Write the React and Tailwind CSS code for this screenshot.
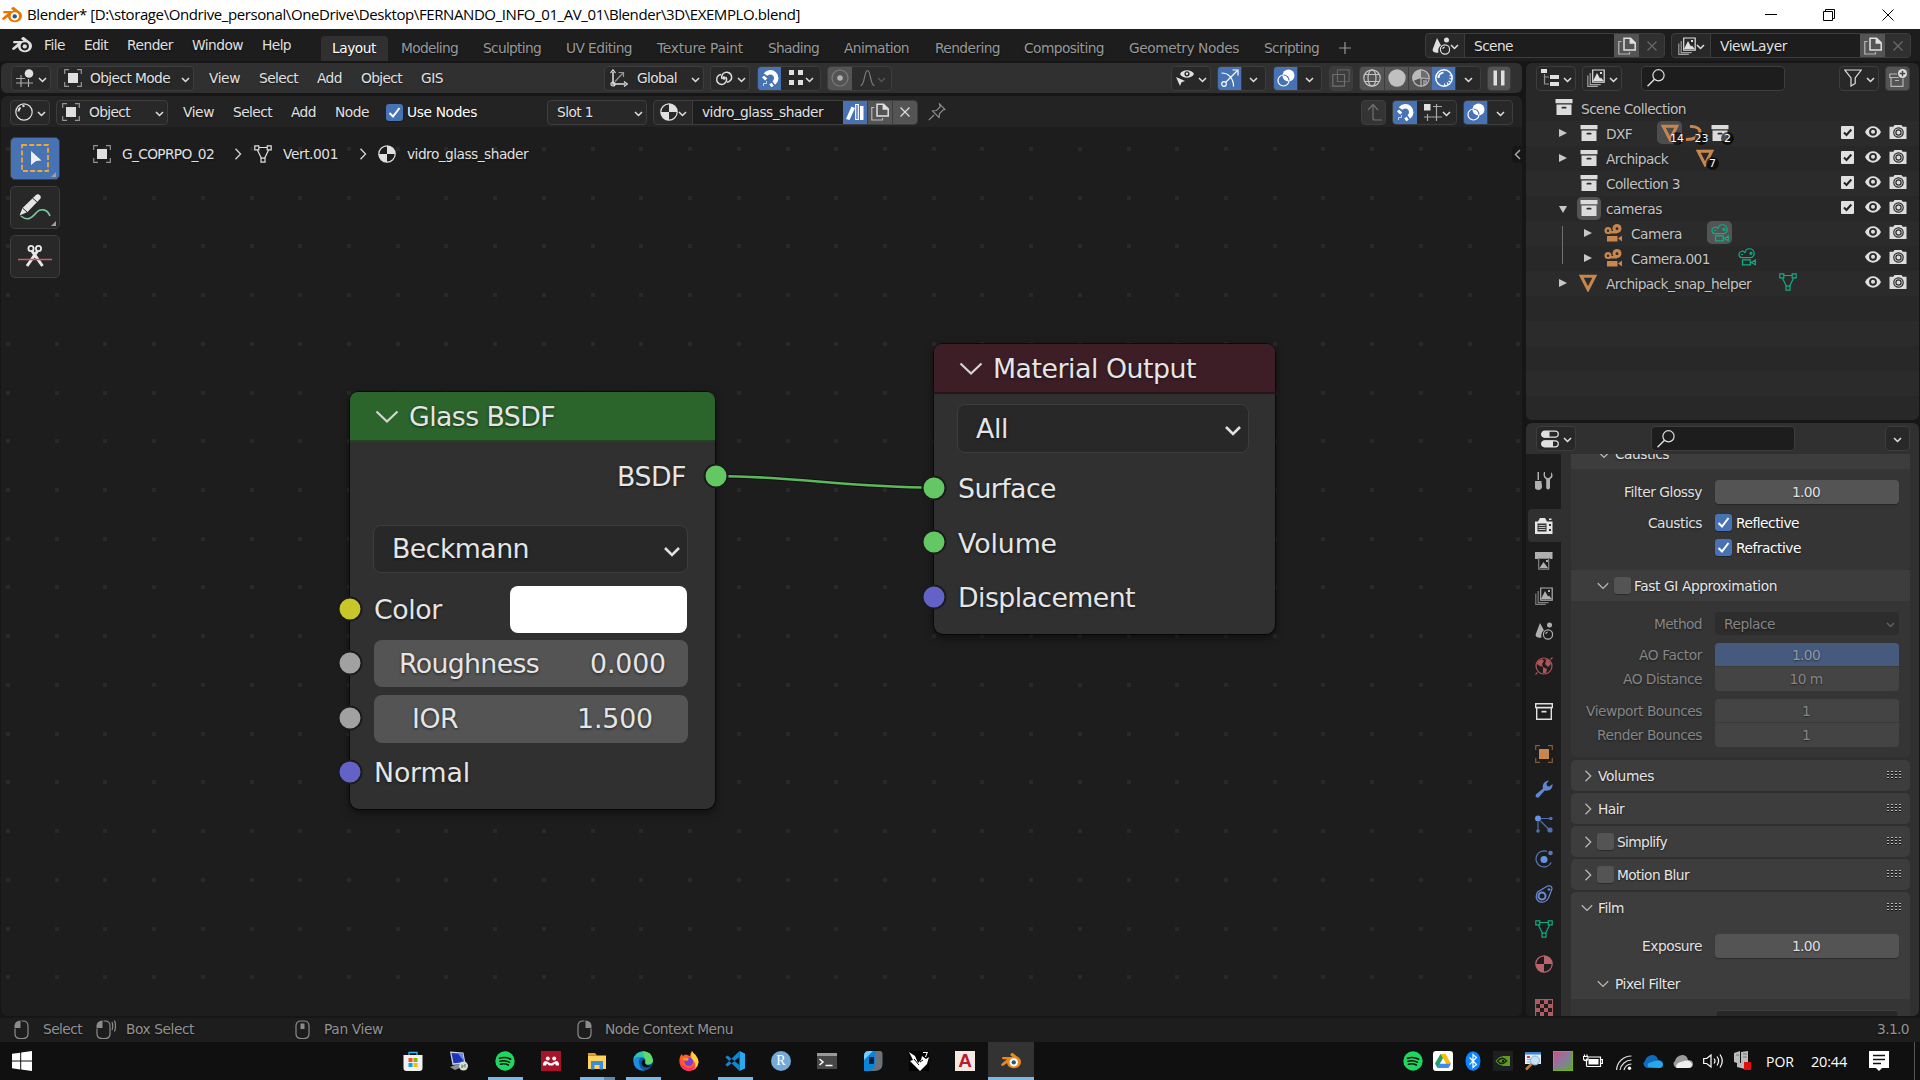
import React from "react";

/* ---------- text ---------- */

const ctx = document.createElement("canvas").getContext("2d");

// Glyph advances in this interface are cut to whole pixels; spread that over the run.
function spacing(text, size) {
  ctx.font = size + 'px "DejaVu Sans"';
  let cut = 0;
  for (const ch of text) cut += Math.floor(ctx.measureText(ch).width + 0.01);
  return (cut - ctx.measureText(text).width) / text.length;
}

function T({ children, className = "" }) {
  return (
    <span
      className={"block shrink-0 whitespace-pre text-[13.75px] leading-[18px] [text-shadow:0_1px_2px_rgba(0,0,0,0.5)] " + className}
      style={{ letterSpacing: spacing(children, 13.75) }}
    >
      {children}
    </span>
  );
}

function Big({ children, className = "" }) {
  return (
    <span
      className={"block shrink-0 whitespace-pre text-[26.75px] leading-[32px] text-[#e5e5e5] [text-shadow:0_1px_3px_rgba(0,0,0,0.6)] " + className}
      style={{ letterSpacing: spacing(children, 26.75) }}
    >
      {children}
    </span>
  );
}

// Text set to a fixed run width.
function Fit({ children, width, font, className = "" }) {
  ctx.font = font;
  const ls = (width - ctx.measureText(children).width) / children.length;
  return (
    <span className={"block shrink-0 whitespace-pre " + className} style={{ letterSpacing: ls, font }}>
      {children}
    </span>
  );
}

/* ---------- icons ---------- */

function I({ children, s = 18, vb = 18, className = "" }) {
  return (
    <svg width={s} height={s} viewBox={`0 0 ${vb} ${vb}`} fill="none" stroke="currentColor" strokeWidth="1.2" className={"block shrink-0 " + className}>
      {children}
    </svg>
  );
}
const F = { fill: "currentColor", stroke: "none" };

const Down = ({ className = "" }) => (
  <svg width="9" height="6" viewBox="0 0 9 6" fill="none" stroke="currentColor" strokeWidth="1.5" className={"mt-[3px] block shrink-0 " + className}>
    <path d="M1 1l3.5 3.5L8 1" />
  </svg>
);
const Chev = ({ open, className = "" }) => (
  <svg width="12" height="12" viewBox="0 0 12 12" fill="none" stroke="#b8b8b8" strokeWidth="1.3" className={"block shrink-0 " + className}>
    <path d={open ? "M0.8 3.2L6 8.4l5.2-5.2" : "M3.5 0.8L8.7 6l-5.2 5.2"} />
  </svg>
);
const ObjectIcon = ({ className = "" }) => (
  <I className={className}>
    <rect x="4" y="4" width="10" height="10" {...F} />
    <path d="M.7 5V.7H5M13 .7h4.3V5M17.3 13v4.3H13M5 17.3H.7V13" opacity=".6" />
  </I>
);
const MeshData = ({ className = "" }) => (
  <I className={className}>
    <path d="M5 2.5h8M3.4 5l4 8.300M14.600 5l-4 8.300" />
    <path d="M.8.800h4v4h-4zM13.200.800h4v4h-4zM7 13.200h4v4H7z" />
  </I>
);
const MatIcon = ({ className = "" }) => (
  <I className={className}>
    <circle cx="9" cy="9" r="8.200" />
    <path d="M9 .8v8.200H17.200A8.200 8.200 0 0 0 9 .8zM9 9v8.200A8.200 8.200 0 0 1 .8 9z" {...F} />
  </I>
);
const Collection = ({ className = "" }) => (
  <I className={className}>
    <path d="M.5 1h17v4.300H.5zM1.500 6.600h15V17h-15z" {...F} />
    <rect x="6.500" y="8.700" width="5" height="1.900" rx=".9" fill="#2b2b2b" stroke="none" />
  </I>
);
const Magnet = () => (
  <I>
    <path d="M4.500 5.500A6 6 0 1 1 12.800 14" strokeWidth="4.500" />
    <path d="M2 7.500l3.200 3M9.500 14.500l2 3" strokeWidth="3" />
    <path d="M5.500 12v2.500H2.500V17" strokeWidth="1" opacity=".7" />
  </I>
);
const Overlay = () => (
  <I className="text-white">
    <circle cx="11.500" cy="6.500" r="6" {...F} />
    <circle cx="6.500" cy="11.500" r="5.500" stroke="currentColor" />
    <path d="M6.500 6a5.500 5.500 0 0 1 5.500 5.500" stroke="#4772b3" />
  </I>
);
const Copy = () => (
  <I>
    <path d="M6 1.200h6.500l4.700 4.600V13H6zM12.300 1.500v4.500h4.500" strokeWidth="1.500" />
    <path d="M3.500 4.500H.8V17h10.700v-2" opacity=".7" />
    <path d="M12 1l5.300 5H12z" {...F} />
  </I>
);
const Images = () => (
  <I>
    <path d="M5.700 1h11.500v12.200H5.700z" />
    <path d="M6 12l4-8 3 5.500 1-1 2.800 3.500zM13 3h2v2h-2z" {...F} />
    <path d="M3.200 4v11.700h10.500M.8 6.500v10.800h10" opacity=".65" />
  </I>
);
const SceneIcon = () => (
  <I>
    <path d="M5 1L.8 12c-1 3 2.600 4.300 5.700 3.500C5.500 12 8 8.500 9 8.500z" {...F} />
    <circle cx="14.500" cy="3" r="2.500" {...F} />
    <circle cx="13" cy="12.500" r="4.600" />
    <path d="M10.800 12a2.300 2.300 0 0 1 2-2" />
  </I>
);
const X = ({ className = "" }) => (
  <I s={12} vb={12} className={className}>
    <path d="M1.500 1.500l9 9M10.500 1.500l-9 9" />
  </I>
);
const SearchIcon = () => (
  <I>
    <circle cx="11.500" cy="6.300" r="5.600" />
    <path d="M7.500 10.300L.5 17.300" strokeWidth="1.500" />
  </I>
);
const BlenderLogo = ({ c = "#e0e0e0", eye = "#1d1d1d", inner = "#e0e0e0", s = 20 }) => (
  <svg width={s} height={s} viewBox="0 0 24 24" className="block shrink-0">
    <path
      d="M12.600 2.800c.7-.6 1.700-.4 2.300.1l6.900 5.600c2.200 1.900 2.700 4.900 1.600 7.300-1.500 3.300-4.900 5-8.400 4.900-4-.1-7.300-2.700-7.800-6.300L3 17.500c-.8.6-1.900.6-2.500 0-.6-.7-.3-1.600.3-2.100L7.200 10H2.800c-1.900 0-1.900-2.800 0-2.800h11l-2.500-2.200c-.6-.6-.1-1.500 1.300-2.200z"
      fill={c}
    />
    <circle cx="15.300" cy="13.600" r="4.900" fill={eye} />
    <circle cx="15.300" cy="13.600" r="2.600" fill={inner} />
  </svg>
);
const EyeIcon = () => (
  <I className="text-[#e0e0e0]">
    <path d="M1 9c3.500-7.600 12.500-7.600 16 0-3.500 7.600-12.500 7.600-16 0z" {...F} />
    <circle cx="9" cy="8.800" r="3.900" fill="#2a2a2a" stroke="none" />
    <circle cx="9" cy="8.800" r="2" {...F} />
  </I>
);
const CamIcon = () => (
  <I className="text-[#dcdcdc]">
    <path d="M.5 3.800h3.800L5.500 2h7l1.200 1.800h3.800V16H.5z" {...F} />
    <circle cx="9.500" cy="9.500" r="4.700" stroke="#2a2a2a" />
    <circle cx="9.500" cy="9.500" r="2.600" stroke="#2a2a2a" />
  </I>
);
const CheckSq = () => (
  <I s={13} vb={13}>
    <rect width="13" height="13" rx="1" fill="#e0e0e0" stroke="none" />
    <path d="M3 6.500L5.500 9l4.800-5.500" stroke="#222" strokeWidth="2" />
  </I>
);
const MeshObj = ({ className = "" }) => (
  <I className={"text-[#c8864f] " + className}>
    <path d="M2.200 2.300h13.600L9 15.500z" strokeWidth="3" />
  </I>
);
const MovieObj = () => (
  <I className="text-[#c8864f]">
    <circle cx="4" cy="6.500" r="3.500" {...F} />
    <circle cx="13" cy="4.500" r="4.500" {...F} />
    <path d="M4 7h9v2.500H4zM3 12h10.500v5.500H3zM18 11.500v6l-4-3z" {...F} />
    <circle cx="4" cy="6.700" r="1.200" fill="#282828" stroke="none" />
    <circle cx="13" cy="4.700" r="1.400" fill="#282828" stroke="none" />
  </I>
);
const MovieData = () => (
  <I className="text-[#13ab84]">
    <path d="M7 4.500a4.600 4.600 0 1 1 6 5.200H4.200A3.200 3.200 0 1 1 7 5zM4.500 11.900h7.800v4.900H4.500zM17.300 12v4.700l-4-2.300z" />
    <circle cx="13" cy="5.300" r="1" />
    <path d="M3 6.500h2" />
  </I>
);

/* ---------- widgets ---------- */

function Group({ className = "", bg = "bg-[#282828]", color = "text-[#e0e0e0]", children }) {
  return <div className={`flex h-[25px] shrink-0 overflow-hidden rounded-[4px] border border-[#3d3d3d] ${bg} ${color} ${className}`}>{children}</div>;
}
const Cell = ({ className = "", children }) => <div className={"flex h-full shrink-0 items-center justify-center " + className}>{children}</div>;
const IconDrop = ({ className = "", children }) => (
  <Group className={"items-center justify-between pr-[3px] pl-[4px] " + className}>
    {children}
    <Down />
  </Group>
);
const Check = ({ on, className = "" }) => (
  <div className={"flex size-[17px] shrink-0 items-center justify-center rounded-[3px] shadow-[0_1px_1px_rgba(0,0,0,0.3)] " + (on ? "bg-[#4772b3] " : "bg-[#545454] ") + className}>
    {on && (
      <svg width="13" height="13" viewBox="0 0 13 13" fill="none" stroke="#fff" strokeWidth="2">
        <path d="M1.500 7l3.500 3.500 6.500-8.500" />
      </svg>
    )}
  </div>
);

/* ---------- window title + top bar ---------- */

function TitleBar() {
  return (
    <div className="flex h-[29px] items-center bg-white text-black">
      <div className="ml-[2px] w-[25px]"><BlenderLogo c="#ea7600" eye="#fff" inner="#265787" s={20} /></div>
      <Fit width={773} font={'15px "Open Sans", sans-serif'} className="mb-[2px]">{"Blender* [D:\\storage\\Ondrive_personal\\OneDrive\\Desktop\\FERNANDO_INFO_01_AV_01\\Blender\\3D\\EXEMPLO.blend]"}</Fit>
      <div className="ml-auto flex items-center">
        <svg width="12" height="12" viewBox="0 0 12 12" className="mr-[46px]"><path d="M0 5.500h12" stroke="#000" /></svg>
        <svg width="12" height="12" viewBox="0 0 12 12" fill="none" stroke="#000" className="mr-[47px]"><path d="M.5 2.500h9v9h-9zM2.500 2.500V.5h9v9h-2" /></svg>
        <svg width="12" height="12" viewBox="0 0 12 12" stroke="#000" className="mr-[26px]"><path d="M.5.5l11 11M11.500.5l-11 11" /></svg>
      </div>
    </div>
  );
}

const IdBlock = ({ icon, name, className = "" }) => (
  <Group className={"w-[240px] " + className}>
    <Cell className="w-[39px] justify-between border-r border-[#3d3d3d] px-[4px]">{icon}<Down /></Cell>
    <Cell className="grow justify-start bg-[#1d1d1d] pl-[9px]"><T>{name}</T></Cell>
    <Cell className="w-[25px] bg-[#545454]"><Copy /></Cell>
    <Cell className="w-[25px] bg-[#303030]"><X className="text-[#6a6a6a]" /></Cell>
  </Group>
);

function TopBar() {
  return (
    <div className="flex h-[32px] bg-[#1d1d1d] text-[#e0e0e0]">
      <div className="flex h-[32px] w-[321px] items-center">
        <div className="ml-[12px] w-[32px]"><BlenderLogo /></div>
        <T className="w-[40px]">File</T>
        <T className="w-[43px]">Edit</T>
        <T className="w-[65px]">Render</T>
        <T className="w-[70px]">Window</T>
        <T>Help</T>
      </div>
      <div className="mt-[7px] flex h-[25px] text-[#989898]">
        <div className="flex h-full w-[67px] rounded-t-[4px] bg-[#303030] pt-[3px] pl-[11px] text-white"><T>Layout</T></div>
        <div className="flex pt-[3px]">
          <T className="ml-[13px] w-[82px]">Modeling</T>
          <T className="w-[83px]">Sculpting</T>
          <T className="w-[91px]">UV Editing</T>
          <T className="w-[111px]">Texture Paint</T>
          <T className="w-[76px]">Shading</T>
          <T className="w-[91px]">Animation</T>
          <T className="w-[89px]">Rendering</T>
          <T className="w-[105px]">Compositing</T>
          <T className="w-[135px]">Geometry Nodes</T>
          <T className="w-[75px]">Scripting</T>
          <I s={12} vb={12} className="mt-[3px]"><path d="M6 0v12M0 6h12" /></I>
        </div>
      </div>
      <div className="mt-[4px] mr-[9px] ml-auto flex gap-[6px]">
        <IdBlock icon={<SceneIcon />} name="Scene" />
        <IdBlock icon={<Images />} name="ViewLayer" />
      </div>
    </div>
  );
}

/* ---------- 3D viewport header ---------- */

function ViewportHeader() {
  return (
    <div className="flex h-[30px] items-center rounded-[6px] bg-[#303030] pl-[10px] text-[#e0e0e0]">
      <IconDrop className="w-[40px]">
        <I>
          <path d="M5 6v12M12.500 10v8M0 9.500h9M0 14h17" opacity=".7" />
          <circle cx="13" cy="4.500" r="4.300" {...F} />
        </I>
      </IconDrop>
      <Group className="ml-[6px] w-[137px] items-center pr-[3px] pl-[6px]">
        <ObjectIcon />
        <T className="ml-[8px]">Object Mode</T>
        <Down className="ml-auto" />
      </Group>
      <T className="ml-[15px] w-[50px]">View</T>
      <T className="w-[58px]">Select</T>
      <T className="w-[44px]">Add</T>
      <T className="w-[60px]">Object</T>
      <T className="w-[183px]">GIS</T>
      <Group className="w-[100px] items-center pr-[3px] pl-[5px]">
        <I>
          <path d="M3 3v12h12" strokeWidth="1.500" />
          <path d="M.5 4L3 .8 5.500 4M14 12.500l3.200 2.500L14 17.500" />
          <circle cx="3" cy="15" r="2" />
          <path d="M5 12.500L13 4M8.500 3.500H13.500V8" opacity=".6" />
        </I>
        <T className="ml-[9px]">Global</T>
        <Down className="ml-auto" />
      </Group>
      <IconDrop className="ml-[6px] w-[40px]">
        <I>
          <path d="M7 10a5 5 0 1 1 5 3.200M11 8a5 5 0 1 1-5-2.500" strokeWidth="1.500" />
          <circle cx="9" cy="9" r="1.800" {...F} />
        </I>
      </IconDrop>
      <Group className="ml-[7px] w-[64px]">
        <Cell className="w-[23px] bg-[#4772b3] text-white"><Magnet /></Cell>
        <Cell className="grow justify-between pr-[3px] pl-[4px]">
          <I s={16} vb={16}><path d="M0 0h5v5H0zM9 0h5v5H9zM0 10h5v5H0zM9 10h5v5H9z" {...F} /></I>
          <Down />
        </Cell>
      </Group>
      <Group className="ml-[6px] w-[65px]" bg="bg-[#2c2c2c]">
        <Cell className="w-[24px] bg-[#545454] text-[#b0b0b0]">
          <I><circle cx="9" cy="9" r="8" opacity=".45" /><circle cx="9" cy="9" r="2.800" {...F} /></I>
        </Cell>
        <Cell className="grow justify-between pr-[3px] pl-[4px] text-[#7d7d7d]">
          <I><path d="M1.500 16.500C6 16.500 5 1.500 8.500 1.500s2.500 15 7 15" /></I>
          <Down className="opacity-50" />
        </Cell>
      </Group>

      <div className="mr-[11px] ml-auto flex items-center">
        <IconDrop className="w-[40px]">
          <I>
            <path d="M4 5c2.500-5 11.500-5 14 0-2.500 5-11.500 5-14 0zM0 8l9 4-3.500 1.200L4 17z" {...F} />
            <circle cx="11" cy="4.800" r="2.600" fill="#282828" stroke="none" /><circle cx="11" cy="4.800" r="1.200" {...F} />
          </I>
        </IconDrop>
        <Group className="ml-[6px] w-[49px]">
          <Cell className="w-[23px] bg-[#4772b3] text-white">
            <I><path d="M.5 4c7 0 12 5 12 13.500M5 13L16 2M11.500 1H17v5.500" /><circle cx="3" cy="15" r="2.300" /></I>
          </Cell>
          <Cell className="grow border-l border-[#3d3d3d]"><Down /></Cell>
        </Group>
        <Group className="ml-[7px] w-[49px]">
          <Cell className="w-[23px] bg-[#4772b3]"><Overlay /></Cell>
          <Cell className="grow border-l border-[#3d3d3d]"><Down /></Cell>
        </Group>
        <Group className="ml-[7px] w-[24px] items-center justify-center" bg="bg-[#3c3c3c]" color="text-[#707070]">
          <I><path d="M5.500.8h11.700v11.700H5.500z" opacity=".7" /><path d="M.8 5.500h11.700v11.700H.8z" /><path d="M5.500 8v4.500H10" strokeDasharray="2 1.500" /></I>
        </Group>
        <Group className="ml-[6px] w-[122px]">
          <Cell className="w-[24px] bg-[#545454] text-[#c4c4c4]"><I><circle cx="9" cy="9" r="8.200" /><ellipse cx="9" cy="9" rx="4" ry="8.200" /><path d="M1.500 5.500h15M1.500 12.500h15" /></I></Cell>
          <Cell className="w-[24px] border-l border-[#3d3d3d] bg-[#545454] text-[#c0c0c0]"><I><circle cx="9" cy="9" r="8.700" {...F} /></I></Cell>
          <Cell className="w-[24px] border-l border-[#3d3d3d] bg-[#545454] text-[#bababa]">
            <I><circle cx="9" cy="9" r="8.200" /><path d="M9 .5A8.500 8.500 0 0 0 1 12L9 9z" {...F} /><path d="M9 .5A8.500 8.500 0 0 1 17.500 9H9z" {...F} opacity=".25" /><path d="M9 9v8M9 9l8 .5M12 11v5.500M14 10.500v4" /></I>
          </Cell>
          <Cell className="w-[23px] bg-[#4772b3] text-white">
            <I><circle cx="9" cy="9" r="8.200" strokeWidth="1.500" /><path d="M3.500 9A5.500 5.500 0 0 1 8.500 3.500" strokeWidth="2" /><path d="M9.500 14.500l.5 2.500M12 13.500l1.500 2.500M13.500 12l2.500 1.500M14.500 9.500l2.500.5M14.500 7l2-.5" /></I>
          </Cell>
          <Cell className="grow border-l border-[#3d3d3d]"><Down /></Cell>
        </Group>
        <Group className="ml-[6px] w-[24px] items-center justify-center" bg="bg-[#545454]">
          <I><path d="M3.500 1.500h3.500v15H3.500zM11 1.500h3.500v15H11z" {...F} /></I>
        </Group>
      </div>
    </div>
  );
}

/* ---------- node editor ---------- */

function NodeHeader() {
  return (
    <div className="flex h-[31px] items-center rounded-t-[6px] bg-[#232323] pt-[1px] pl-[9px] text-[#e0e0e0]">
      <IconDrop className="w-[40px]">
        <I><circle cx="9" cy="9" r="8.200" /><path d="M3.500 8.500A5.500 5.500 0 0 1 5.500 4.500M7.500 3.200l2-.4" strokeWidth="2" /></I>
      </IconDrop>
      <Group className="ml-[6px] w-[112px] items-center pr-[3px] pl-[5px]">
        <ObjectIcon />
        <T className="ml-[9px]">Object</T>
        <Down className="ml-auto" />
      </Group>
      <T className="ml-[15px] w-[50px]">View</T>
      <T className="w-[58px]">Select</T>
      <T className="w-[44px]">Add</T>
      <T className="w-[51px]">Node</T>
      <Check on />
      <T className="ml-[4px] w-[140px] text-white">Use Nodes</T>
      <Group className="w-[100px] items-center pr-[3px] pl-[9px]">
        <T>Slot 1</T>
        <Down className="ml-auto" />
      </Group>
      <Group className="ml-[6px] w-[265px]">
        <Cell className="w-[39px] justify-between border-r border-[#3d3d3d] px-[4px]"><MatIcon /><Down /></Cell>
        <Cell className="grow justify-start bg-[#1d1d1d] pl-[9px]"><T>vidro_glass_shader</T></Cell>
        <Cell className="w-[24px] bg-[#4772b3] text-white">
          <I><path d="M5.500 3.500L9 5 3.500 17 0 16zM14 3h3.500v14H14z" {...F} /><path d="M9.700 1.500h2.600v15H9.700z" /></I>
        </Cell>
        <Cell className="w-[25px] border-l border-[#3d3d3d] bg-[#545454]"><Copy /></Cell>
        <Cell className="w-[25px] border-l border-[#3d3d3d] bg-[#545454]"><X /></Cell>
      </Group>
      <I className="ml-[10px] text-[#8c8c8c]"><path d="M11.500 1l5.500 5.500-2 .5-3.500 3.500-.5 4-6.500-6.500 4-.5L12 4zM6 12L.8 17.200" /></I>
      <div className="mr-[9px] ml-auto flex">
        <Group className="w-[25px] items-center justify-center" bg="bg-[#343434]" color="text-[#707070]">
          <I><path d="M3 7l5-5.500L13 7M8 1.500V15q0 2 2 2h7" /></I>
        </Group>
        <Group className="ml-[6px] w-[65px]">
          <Cell className="w-[24px] bg-[#4772b3] text-white"><Magnet /></Cell>
          <Cell className="grow justify-between pr-[3px] pl-[5px]">
            <I><path d="M12.500 1v17M3.500 11v7M9 3.500h9M0 14h18" opacity=".7" /><path d="M0 1h6.500v6.500H0z" {...F} /></I>
            <Down />
          </Cell>
        </Group>
        <Group className="ml-[6px] w-[50px]">
          <Cell className="w-[23px] bg-[#4772b3]"><Overlay /></Cell>
          <Cell className="grow border-l border-[#3d3d3d]"><Down /></Cell>
        </Group>
      </div>
    </div>
  );
}

const Corner = () => (
  <svg width="5" height="5" viewBox="0 0 5 5" className="absolute right-[3px] bottom-[2px]"><path d="M5 0v5H0z" fill="#a0a0a0" /></svg>
);

function ToolShelf() {
  const box = "relative flex h-[43px] w-[50px] items-center justify-center rounded-[5px] border border-[#3d3d3d] ";
  return (
    <div className="mt-[10px] ml-[9px] flex w-[50px] flex-col gap-[6px]">
      <div className={box + "bg-[#4772b3]"}>
        <svg width="30" height="30" viewBox="0 0 30 30" className="mb-[1px]">
          <rect x="2" y="2" width="26" height="26" fill="none" stroke="#f0a830" strokeWidth="1.800" strokeDasharray="5 2.200" />
          <path d="M11 8l10.500 9.500-5.500.5-5 4z" fill="#f0f0f0" />
        </svg>
        <Corner />
      </div>
      <div className={box + "bg-[#282828]"}>
        <svg width="34" height="30" viewBox="0 0 34 30" fill="none">
          <path d="M3 23c8 7 13-1 16-4s10-4 13 4" stroke="#7cc79b" strokeWidth="1.600" />
          <path d="M18 2c2-2 6 1 4.500 3.500L9.500 19 1.500 22.500 4.500 15z" fill="#e5e5e5" />
          <path d="M14.500 5l5 4.500M4.500 15l5 4.500" stroke="#282828" strokeWidth="1" />
        </svg>
        <Corner />
      </div>
      <div className={box + "bg-[#282828]"}>
        <svg width="34" height="30" viewBox="0 0 34 30" fill="none" stroke="#e8e8e8">
          <circle cx="13" cy="6.500" r="2.600" strokeWidth="1.800" />
          <circle cx="20.500" cy="6.500" r="2.600" strokeWidth="1.800" />
          <path d="M14 9l10.500 15M19.500 9L9 24" strokeWidth="3" />
          <path d="M0 17.500h34" stroke="#c6605c" strokeWidth="1.500" />
        </svg>
      </div>
    </div>
  );
}

const Crumb = () => (
  <svg width="8" height="12" viewBox="0 0 8 12" fill="none" stroke="#d0d0d0" strokeWidth="1.400"><path d="M1.500.8L6.500 6l-5 5.200" /></svg>
);

const range = (n) => Array.from({ length: n }, (_, i) => i);

function Grid() {
  return (
    <svg width="1521" height="889" className="absolute inset-0" fill="#292929">
      {range(19).map((r) =>
        range(32).map((c) => {
          const x = Math.round(6 + c * 48.72);
          return <rect key={r + "-" + c} x={x} y={Math.round(20 + r * 48.72)} width="4" height="4" />;
        })
      )}
    </svg>
  );
}

const Socket = ({ color, right, className = "" }) => (
  <svg width="26" height="26" viewBox="0 0 26 26" className={"absolute top-1/2 -mt-[13px] " + (right ? "-right-[14px] " : "-left-[13px] ") + className}>
    <circle cx="13" cy="13" r="11.500" fill={color} stroke="#1b1b1b" strokeWidth="2" />
  </svg>
);

const NodeTitle = ({ className, children }) => (
  <div className={"flex h-[50px] shrink-0 items-center rounded-t-[8px] border-b-[2px] border-black/30 pt-[1px] pl-[25px] " + className}>
    <svg width="24" height="14" viewBox="0 0 24 14" fill="none" stroke="#d5d5d5" strokeWidth="2.200" className="mr-[10px]"><path d="M1.500 1.500L12 11.500 22.500 1.500" /></svg>
    <Big>{children}</Big>
  </div>
);
const BigDown = () => (
  <svg width="18" height="12" viewBox="0 0 18 12" fill="none" stroke="#e0e0e0" strokeWidth="2.600" className="mt-[5px] mr-[6px] ml-auto"><path d="M2 2l7 7 7-7" /></svg>
);

const nodeCls = "absolute flex flex-col rounded-[9px] bg-[#303030] shadow-[0_0_0_1px_rgba(0,0,0,0.55),0_3px_10px_rgba(0,0,0,0.6)] ";

function GlassNode() {
  return (
    <div className={nodeCls + "top-[265px] left-[350px] h-[417px] w-[365px]"}>
      <NodeTitle className="bg-[#2b652b]">Glass BSDF</NodeTitle>
      <div className="relative mt-[7px] flex h-[54px] items-center justify-end pt-[2px] pr-[29px]">
        <Big>BSDF</Big>
        <Socket right color="#63c763" />
      </div>
      <div className="mt-[22px] ml-[23px] flex h-[48px] w-[315px] items-center rounded-[8px] border border-[#3d3d3d] bg-[#282828] pl-[18px]">
        <Big>Beckmann</Big>
        <BigDown />
      </div>
      <div className="relative mt-[13px] flex h-[47px] items-center justify-between pr-[28px] pl-[24px]">
        <Socket color="#c7c729" className="-translate-y-px" />
        <Big>Color</Big>
        <div className="h-[47px] w-[177px] rounded-[8px] bg-white" />
      </div>
      <div className="relative mt-[7px] flex h-[47px] pl-[24px]">
        <Socket color="#a1a1a1" className="-translate-y-px" />
        <div className="flex w-[314px] shrink-0 items-center justify-between rounded-[8px] bg-[#545454] pr-[22px] pl-[25px]"><Big>Roughness</Big><Big>0.000</Big></div>
      </div>
      <div className="relative mt-[8px] flex h-[48px] pl-[24px]">
        <Socket color="#a1a1a1" className="-translate-y-px" />
        <div className="flex w-[314px] shrink-0 items-center justify-between rounded-[8px] bg-[#545454] pr-[35px] pl-[38px]"><Big>IOR</Big><Big>1.500</Big></div>
      </div>
      <div className="relative mt-[3px] flex h-[54px] items-center pl-[24px]">
        <Socket color="#6363c7" className="-translate-y-px" />
        <Big>Normal</Big>
      </div>
    </div>
  );
}

function OutputNode() {
  return (
    <div className={nodeCls + "top-[217px] left-[934px] h-[290px] w-[341px]"}>
      <NodeTitle className="bg-[#3d1e27]">Material Output</NodeTitle>
      <div className="mx-[23px] mt-[10px] flex h-[49px] w-[292px] shrink-0 items-center rounded-[8px] border border-[#3d3d3d] bg-[#282828] pl-[18px]">
        <Big>All</Big>
        <BigDown />
      </div>
      <div className="relative mt-[7px] flex h-[55px] items-center pt-[2px] pl-[24px]"><Socket color="#63c763" /><Big>Surface</Big></div>
      <div className="relative flex h-[54px] items-center pt-[3px] pl-[24px]"><Socket color="#63c763" /><Big>Volume</Big></div>
      <div className="relative flex h-[55px] items-center pt-[2px] pl-[24px]"><Socket color="#6363c7" /><Big>Displacement</Big></div>
    </div>
  );
}

function NodeEditor() {
  return (
    <div className="flex h-[920px] flex-col overflow-hidden rounded-[6px] bg-[#1d1d1d]">
      <NodeHeader />
      <div className="relative -ml-px flex grow pl-px">
        <Grid />
        <div className="relative flex w-full">
          <ToolShelf />
          <div className="mt-[18px] ml-[33px] flex h-[18px] items-center text-[#e0e0e0]">
            <ObjectIcon />
            <T className="ml-[11px] w-[112px]">G_COPRPO_02</T>
            <Crumb />
            <MeshData className="ml-[12px]" />
            <T className="ml-[11px] w-[76px]">Vert.001</T>
            <Crumb />
            <MatIcon className="ml-[11px]" />
            <T className="ml-[11px]">vidro_glass_shader</T>
          </div>
          <div className="mt-[19px] ml-auto flex h-[17px] w-[10px] items-center justify-center rounded-l-[4px] bg-[#161616]">
            <svg width="7" height="11" viewBox="0 0 7 11" fill="none" stroke="#a8a8a8" strokeWidth="1.500"><path d="M6 1L1.500 5.500 6 10" /></svg>
          </div>
        </div>
        <svg width="230" height="40" viewBox="715 470 230 40" className="absolute top-[343px] left-[715px]" fill="none">
          <path d="M716 476C790 476 850 487.500 934 487.500" stroke="#111" strokeWidth="4.500" />
          <path d="M716 476C790 476 850 487.500 934 487.500" stroke="#5cb85c" strokeWidth="2.600" />
        </svg>
        <GlassNode />
        <OutputNode />
      </div>
    </div>
  );
}

/* ---------- outliner ---------- */

const Tri = ({ open, className = "" }) => (
  <svg width="8" height="8" viewBox="0 0 8 8" className={"block shrink-0 " + className}><path d={open ? "M0 1h8L4 8z" : "M0 0l8 4-8 4z"} fill="#c8c8c8" /></svg>
);
const Badge = ({ children }) => (
  <span className="absolute top-[8px] left-[10px] flex size-[13px] items-center justify-center rounded-full bg-black/65 text-[11px] leading-[13px] text-white">{children}</span>
);
const Row = ({ alt, check, bare, children }) => (
  <div className={"flex h-[25px] shrink-0 items-center pr-[12px] text-[#c2c2c2] " + (alt ? "bg-[#2b2b2b]" : "")}>
    {children}
    {!bare && (
      <div className="mb-[3px] ml-auto flex items-center">
        {check && <CheckSq />}
        <div className="ml-[10px]"><EyeIcon /></div>
        <div className="ml-[7px]"><CamIcon /></div>
      </div>
    )}
  </div>
);

function Outliner() {
  return (
    <div className="flex h-[357px] flex-col overflow-hidden rounded-[6px] bg-[#282828]">
      <div className="flex h-[33px] shrink-0 items-center pb-[3px] pl-[10px] text-[#e0e0e0]">
        <IconDrop className="w-[40px]">
          <I><path d="M0 0h6v4H0zM9 6h9v4H9zM9 13h9v4H9z" {...F} /><path d="M3.500 5v10H8M3.500 8H8" opacity=".6" /></I>
        </IconDrop>
        <IconDrop className="ml-[6px] w-[40px]"><Images /></IconDrop>
        <Group className="ml-[19px] w-[144px] items-center pl-[5px]" bg="bg-[#1d1d1d]"><SearchIcon /></Group>
        <IconDrop className="ml-[54px] w-[40px]"><I><path d="M.8 1h16.400l-6 8v5.500L7 17V9z" /></I></IconDrop>
        <Group className="ml-[6px] w-[25px] items-center justify-center" bg="bg-[#545454]">
          <I><path d="M8 5H.8v3.500h9M2 9v8.300h12V9.500M6 11.500h4" opacity=".7" /><circle cx="13.500" cy="4.500" r="4.500" {...F} /><path d="M13.500 1.700v5.600M10.700 4.500h5.600" stroke="#444" strokeWidth="1.500" /></I>
        </Group>
      </div>
      <Row bare><Collection className="mb-[3px] ml-[29px] text-[#dcdcdc]" /><T className="ml-[8px]">Scene Collection</T></Row>
      <Row alt check>
        <Tri className="mb-[1px] ml-[33px]" />
        <Collection className="mb-[1px] ml-[13px] text-[#dcdcdc]" />
        <T className="ml-[8px]">DXF</T>
        <div className="mb-[2px] ml-[25px] flex h-[23px] w-[25px] items-center justify-center rounded-[5px] bg-[#4d4d4d]">
          <div className="relative"><MeshObj /><Badge>14</Badge></div>
        </div>
        <div className="relative mb-[2px] ml-[3px] text-[#c8864f]"><I><path d="M5 2.500c14-1 14 13 -4 13" strokeWidth="3" /></I><Badge>23</Badge></div>
        <div className="relative mb-[2px] ml-[8px] text-[#dcdcdc]"><Collection /><Badge>2</Badge></div>
      </Row>
      <Row check>
        <Tri className="mb-[1px] ml-[33px]" />
        <Collection className="mb-[1px] ml-[13px] text-[#dcdcdc]" />
        <T className="ml-[8px]">Archipack</T>
        <div className="relative mb-[2px] ml-[28px]"><MeshObj /><Badge>7</Badge></div>
      </Row>
      <Row alt check><Collection className="mb-[1px] ml-[54px] text-[#dcdcdc]" /><T className="ml-[8px]">Collection 3</T></Row>
      <Row check>
        <Tri open className="ml-[33px]" />
        <div className="mb-[1px] ml-[10px] flex h-[23px] w-[24px] items-center justify-center rounded-[5px] bg-[#545454]"><Collection className="text-[#dcdcdc]" /></div>
        <T className="ml-[5px]">cameras</T>
      </Row>
      <div className="relative flex flex-col">
        <Row alt>
          <Tri className="mb-[1px] ml-[58px]" />
          <div className="mb-[2px] ml-[12px]"><MovieObj /></div>
          <T className="ml-[9px]">Camera</T>
          <div className="mb-[2px] ml-[25px] flex h-[23px] w-[25px] items-center justify-center rounded-[5px] bg-[#545454]"><MovieData /></div>
        </Row>
        <Row>
          <Tri className="mb-[1px] ml-[58px]" />
          <div className="mb-[2px] ml-[12px]"><MovieObj /></div>
          <T className="ml-[9px]">Camera.001</T>
          <div className="mb-[3px] ml-[28px]"><MovieData /></div>
        </Row>
        <div className="absolute top-[5px] left-[36px] h-[38px] w-px bg-[#707070]" />
      </div>
      <Row alt>
        <Tri className="mb-[1px] ml-[33px]" />
        <MeshObj className="mb-[1px] ml-[12px]" />
        <T className="ml-[9px]">Archipack_snap_helper</T>
        <MeshData className="mb-[3px] ml-[28px] text-[#13ab84]" />
      </Row>
      <Row bare /><Row bare alt /><Row bare /><Row bare alt /><Row bare />
    </div>
  );
}

/* ---------- properties ---------- */

const TabIcon = ({ className = "", children }) => <div className={"flex h-[18px] shrink-0 items-center justify-center pl-[1px] " + className}>{children}</div>;

function PropTabs() {
  return (
    <div className="flex w-[35px] shrink-0 flex-col bg-[#1d1d1d] pt-[18px] text-[#b0b0b0]">
      <TabIcon>
        <I><path d="M2.500 0h1.500v8h-1.500zM0 9h6.500v2q2 6.500-3.200 7-5.200-.5-3.200-7zM9 0l1 0v4l2 2h2l2-2V0q2.500 3 1 5.500l-2 2V16q-2 3-3.800 0V7.500l-2-2Q8 3 9 0z" {...F} /></I>
      </TabIcon>
      <div className="mt-[19px] ml-[2px] flex h-[33px] shrink-0 items-center rounded-l-[4px] bg-[#303030] pl-[7px] text-[#e6e6e6]">
        <I><path d="M0 4.500h3L5 1h5l2 3.500h5.500V17H0z" {...F} /><path d="M2.500 6.500h9v8h-9z" fill="#303030" stroke="none" /><path d="M3.500 8.500h7M3.500 10.500h7M3.500 12.500h7" strokeWidth=".8" /><path d="M14 7h2v2h-2zM14 12h2v2h-2z" fill="#303030" stroke="none" /><path d="M14 1.500h2.500v1.500H14z" {...F} /></I>
      </div>
      <TabIcon className="mt-[10px]"><I><path d="M0 0h17.500v7H15V6H3v1H0z" {...F} /><path d="M3.700 6.500h10v10.700h-10z" opacity=".7" /><path d="M4.500 16l4-6 4.500 6zM11 8h2v2h-2z" {...F} /></I></TabIcon>
      <TabIcon className="mt-[17px]"><Images /></TabIcon>
      <TabIcon className="mt-[17px]"><SceneIcon /></TabIcon>
      <TabIcon className="mt-[17px] text-[#b0545c]"><I><circle cx="9" cy="9" r="8" /><path d="M3 4l4-2 2 2-2 3 1 3-3-1-3-2zM10 2l4 1 2 4-3 3-3-3 1-3zM8 10l4 2-1 4H8z" {...F} /><path d="M17.500.5L15.500 2.500M.5 17.500L2.500 15.500" /></I></TabIcon>
      <TabIcon className="mt-[27px] text-[#e0e0e0]"><I><path d="M.7 1.700h16.600V5.500H.7zM1.700 5.700h14.600v11.500H1.700z" strokeWidth="1.400" /><path d="M6.500 8.800h5v1.700h-5z" {...F} /></I></TabIcon>
      <TabIcon className="mt-[25px] text-[#c8864f]"><ObjectIcon /></TabIcon>
      <TabIcon className="mt-[17px] text-[#5f86cf]"><I><path d="M.8 14.500L8 8.500C7 5 9 .8 14 .5l-2.500 3 .5 2.500 2.500.5 3-2.500C18 9 14 11.500 9.800 10.500L3.500 17.500Q1.500 18 .6 16.500z" {...F} /></I></TabIcon>
      <TabIcon className="mt-[17px] text-[#5070b0]"><I><circle cx="3" cy="3.500" r="3" fill="#6a92e0" stroke="none" /><circle cx="15.800" cy="3.500" r="1.800" {...F} /><circle cx="3" cy="16" r="1.800" {...F} /><circle cx="15" cy="15" r="2.600" {...F} /><path d="M6 3.500h9M3 7v8M5.500 6l8 8" /></I></TabIcon>
      <TabIcon className="mt-[17px] text-[#5878bd]"><I><path d="M12 1.500A8 8 0 1 0 16.200 12.500" /><circle cx="9" cy="9.500" r="3.500" fill="#6a92e0" stroke="none" /><circle cx="15.500" cy="3" r="2.300" {...F} /></I></TabIcon>
      <TabIcon className="mt-[17px] text-[#6a8cd6]"><I><path d="M2.500 7L12.500 1q4.500-1 4.500 3L13.500 13q-3 5-8.500 4-6-3-2.500-10z" /><circle cx="7" cy="11" r="3.500" strokeWidth="2" /><path d="M14 3v3M12.500 4.500h3" /></I></TabIcon>
      <TabIcon className="mt-[17px] text-[#13ab84]"><MeshData /></TabIcon>
      <TabIcon className="mt-[17px] text-[#b9636b]"><MatIcon /></TabIcon>
      <TabIcon className="mt-[26px] text-[#b05a62]">
        <I><path d="M.6.600h17v17h-17z" />{range(4).map((r) => range(4).map((c) => (r + c) % 2 === 0 && <rect key={r * 4 + c} x={1 + c * 4} y={1 + r * 4} width="4" height="4" {...F} />))}</I>
      </TabIcon>
    </div>
  );
}

const Drag = () => (
  <svg width="15" height="8" viewBox="0 0 15 8" className="mr-[8px] mb-[1px] ml-auto" shapeRendering="crispEdges">
    {range(4).map((i) =>
      range(3).map((j) => (
        <g key={i + "" + j}>
          <rect x={i * 4} y={j * 3} width="2" height="1" fill="#b8b8b8" />
          <rect x={i * 4} y={j * 3 + 1} width="2" height="1" fill="#111" />
        </g>
      ))
    )}
  </svg>
);
const Panel = ({ name, check }) => (
  <div className="mb-[2px] flex h-[31px] shrink-0 items-center rounded-[5px] bg-[#3d3d3d] pl-[11px] text-[#e5e5e5]">
    <Chev />
    {check ? <Check className="ml-[3px]" /> : null}
    <T className={check ? "ml-[3px]" : "ml-[4px]"}>{name}</T>
    <Drag />
  </div>
);
const Prop = ({ label, dim, children, className = "" }) => (
  <div className={"flex shrink-0 items-center " + (dim ? "text-[#858585] " : "text-[#e0e0e0] ") + className}>
    <div className="flex w-[131px] shrink-0 justify-end"><T>{label}</T></div>
    <div className="ml-[13px] flex w-[184px]">{children}</div>
  </div>
);
const Num = ({ className = "", children }) => (
  <div className={"flex h-[24px] w-full items-center justify-center pr-[2px] " + className}><T>{children}</T></div>
);

function Properties() {
  return (
    <div className="flex h-[593px] flex-col overflow-hidden rounded-[6px] bg-[#303030]">
      <div className="flex h-[31px] shrink-0 items-center pl-[10px] text-[#e0e0e0]">
        <IconDrop className="w-[40px]">
          <I><rect x=".7" y="1.200" width="16.600" height="6" rx="3" /><rect x=".7" y="10.800" width="16.600" height="6" rx="3" /><path d="M3.500 1H8.500v6.500h-5Q0 7 .5 4 .5 1.500 3.500 1zM3.500 10.500H12v6.500H3.500Q0 16.500.5 13.500.5 11 3.500 10.500z" {...F} /></I>
        </IconDrop>
        <Group className="ml-[75px] w-[144px] items-center pl-[5px]" bg="bg-[#1d1d1d]"><SearchIcon /></Group>
        <Group className="mr-[9px] ml-auto w-[25px] items-center justify-center"><Down /></Group>
      </div>
      <div className="flex h-[562px] shrink-0 overflow-hidden">
        <PropTabs />
        <div className="ml-[10px] flex w-[339px] shrink-0 flex-col">
          <div className="flex h-[15px] shrink-0 items-end overflow-hidden bg-[#3d3d3d] pl-[27px] text-[#e0e0e0]">
            <Chev open className="mb-[8px]" />
            <T className="mb-[6px] ml-[5px]">Caustics</T>
          </div>
          <div className="flex h-[101px] shrink-0 flex-col rounded-b-[5px] bg-[#353535]">
            <Prop label="Filter Glossy" className="mt-[11px]"><Num className="rounded-[4px] bg-[#545454] shadow-[0_1px_1px_rgba(0,0,0,0.3)]">1.00</Num></Prop>
            <Prop label="Caustics" className="mt-[6px] h-[25px]"><Check on /><T className="ml-[4px] text-white">Reflective</T></Prop>
            <div className="flex h-[25px] items-center pl-[144px]"><Check on /><T className="ml-[4px] text-white">Refractive</T></div>
          </div>
          <div className="flex h-[31px] shrink-0 items-center bg-[#3d3d3d] pl-[26px] text-[#e5e5e5]">
            <Chev open />
            <Check className="ml-[5px]" />
            <T className="ml-[3px]">Fast GI Approximation</T>
          </div>
          <div className="mb-[3px] flex h-[156px] shrink-0 flex-col rounded-b-[5px] bg-[#353535]">
            <Prop dim label="Method" className="mt-[11px] h-[23px]">
              <div className="flex h-[23px] w-full items-center rounded-[4px] bg-[#2d2d2d] pr-[4px] pl-[9px]"><T>Replace</T><Down className="ml-auto opacity-60" /></div>
            </Prop>
            <Prop dim label="AO Factor" className="mt-[8px] h-[24px]"><Num className="rounded-t-[4px] border-b border-[#3a3a3a] bg-[#465a7d] text-[#9098a8]">1.00</Num></Prop>
            <Prop dim label="AO Distance" className="h-[25px] pb-[1px]"><Num className="rounded-b-[4px] bg-[#444444]">10 m</Num></Prop>
            <Prop dim label="Viewport Bounces" className="mt-[7px] h-[24px]"><Num className="rounded-t-[4px] border-b border-[#3a3a3a] bg-[#444444]">1</Num></Prop>
            <Prop dim label="Render Bounces" className="h-[25px] pb-[1px]"><Num className="rounded-b-[4px] bg-[#444444]">1</Num></Prop>
          </div>
          <Panel name="Volumes" />
          <Panel name="Hair" />
          <Panel name="Simplify" check />
          <Panel name="Motion Blur" check />
          <div className="flex h-[160px] shrink-0 flex-col rounded-t-[5px] bg-[#3d3d3d] text-[#e5e5e5]">
            <div className="flex h-[31px] shrink-0 items-center pl-[10px]"><Chev open /><T className="ml-[5px]">Film</T><Drag /></div>
            <Prop label="Exposure" className="mt-[11px] h-[24px]"><Num className="rounded-[4px] bg-[#545454] shadow-[0_1px_1px_rgba(0,0,0,0.3)]">1.00</Num></Prop>
            <div className="mt-[10px] flex h-[31px] shrink-0 items-center pl-[26px]"><Chev open /><T className="ml-[6px]">Pixel Filter</T></div>
            <div className="flex h-[60px] shrink-0 flex-col bg-[#353535]">
              <Prop dim label="Type" className="mt-[11px] h-[24px]">
                <div className="flex h-[24px] w-full items-center rounded-[4px] border border-[#3d3d3d] bg-[#282828] pl-[9px]"><T>Blackman-Harris</T></div>
              </Prop>
            </div>
          </div>
        </div>
      </div>
    </div>
  );
}

/* ---------- status bar ---------- */

const Mouse = ({ b, drag, className = "" }) => (
  <svg width={drag ? 20 : 15} height="19" viewBox={drag ? "0 0 20 19" : "0 0 15 19"} fill="none" stroke="#8c8c8c" strokeWidth="1.200" className={"block shrink-0 " + className}>
    <path d={b === "l" ? "M7.500 1H9q5 0 5 5v7.500q0 5-5 5H6q-5 0-5-5V8.500" : b === "r" ? "M7.500 1H6Q1 1 1 6v7.500q0 5 5 5h3q5 0 5-5V8.500" : "M6 1h3q5 0 5 5v7.500q0 5-5 5H6q-5 0-5-5V6q0-5 5-5z"} />
    <path d={b === "l" ? "M6.500.5v7.500H.5V5.500q.5-4.500 6-5z" : b === "r" ? "M8.500.5v7.500h6V5.500q-.5-4.500-6-5z" : "M5.500 3.500h4v5.500h-4z"} fill="#8c8c8c" stroke="none" />
    {drag && <path d="M16 2q1.500 4 0 8M18.500 0.500q2 5.500 0 11" />}
  </svg>
);

function StatusBar() {
  return (
    <div className="flex h-[24px] items-center bg-[#1d1d1d] pr-[11px] pb-[2px] text-[#929292]">
      <Mouse b="l" className="ml-[14px]" />
      <T className="ml-[14px] w-[53px]">Select</T>
      <Mouse b="l" drag />
      <T className="ml-[10px] w-[169px]">Box Select</T>
      <Mouse b="m" />
      <T className="ml-[14px] w-[253px]">Pan View</T>
      <Mouse b="r" />
      <T className="ml-[13px]">Node Context Menu</T>
      <T className="ml-auto">3.1.0</T>
    </div>
  );
}

/* ---------- taskbar ---------- */

const App20 = ({ children, s = 20 }) => <svg width={s} height={s} viewBox="0 0 20 20" className="block shrink-0">{children}</svg>;
const Spotify = () => (
  <App20>
    <circle cx="10" cy="10" r="9.700" fill="#1ed760" />
    <path d="M4.500 7.200q6-1.800 11.200 1M5 10.300q5-1.500 9.500.9M5.500 13.200q4.200-1.200 7.800.8" stroke="#111" strokeWidth="1.600" fill="none" strokeLinecap="round" />
  </App20>
);

const Task = ({ on, split, active, children }) => (
  <div className={"relative flex h-[38px] w-[46px] shrink-0 items-center justify-center " + (active ? "bg-[#333333]" : "")}>
    {children}
    {on && (
      <div className={"absolute bottom-0 flex h-[3px] " + (active ? "w-[46px]" : "w-[35px]")}>
        <div className="grow bg-[#76b9ed]" />
        {split && <div className="w-[11px] bg-[#5a8bb3]" />}
      </div>
    )}
  </div>
);
const Tray = ({ children }) => <div className="flex w-[30px] shrink-0 items-center justify-center">{children}</div>;

function TaskBar() {
  return (
    <div className="flex h-[38px] items-center bg-[#101010] text-white">
      <div className="w-[390px] pl-[12px]">
        <App20><path d="M0 2.800L8.200 1.700v7.900H0zM9.200 1.500L20 0v9.600H9.200zM0 10.500h8.200v7.900L0 17.200zM9.200 10.500H20V20L9.200 18.500z" fill="#fff" /></App20>
      </div>
      <Task>
        <App20>
          <path d="M6 4V1.500h8V4" fill="none" stroke="#39b5f0" strokeWidth="1.300" />
          <path d="M.5 4h19v13q0 3-3 3h-13q-3 0-3-3z" fill="#f1f1f1" />
          <path d="M5.500 7h4v4h-4z" fill="#f25022" /><path d="M10.500 7h4v4h-4z" fill="#7fba00" /><path d="M5.500 12h4v4h-4z" fill="#00a4ef" /><path d="M10.500 12h4v4h-4z" fill="#ffb900" />
        </App20>
      </Task>
      <Task>
        <App20>
          <path d="M1 .5l13.500 1 2 11L3.500 14z" fill="#c8d4e4" /><path d="M2.500 2l11 .8 1.500 8.500-10.500 1z" fill="#1c35b8" /><path d="M9 2.500l4.500.3 1 7z" fill="#6f8fe8" /><path d="M1 16l8-3 4 3-7 3z" fill="#8a8f98" />
          <circle cx="14.500" cy="15" r="4.500" fill="#d8dcd8" /><path d="M12.500 17l4-4M13 13.500v3M16 13.500v3" stroke="#4d8a4d" />
        </App20>
      </Task>
      <Task on><Spotify /></Task>
      <Task>
        <App20>
          <rect width="20" height="20" fill="#a9122b" />
          <circle cx="6.800" cy="7.500" r="2" fill="#fff" /><circle cx="13.200" cy="7.500" r="2" fill="#fff" />
          <path d="M2 12.500q1.500-3.500 4-2l4 2 4-2q2.500-1.500 4 2v2h-3l-1-2-2 2h-4l-2-2-1 2H2z" fill="#fff" />
        </App20>
      </Task>
      <Task on split>
        <App20>
          <path d="M1 2h7l2 2.500H1z" fill="#e0a020" /><path d="M1 4.500h18V18H1z" fill="#ffd35c" /><path d="M4 10h12v8.500h-3.500V14h-5v4.500H4z" fill="#3a8fd8" />
        </App20>
      </Task>
      <Task on>
        <App20>
          <circle cx="10" cy="10" r="9.800" fill="#0c59a4" />
          <path d="M.3 9A9.800 9.800 0 0 1 19.800 9q.5 4-4.300 4.500-3.500 0-3.500-1.500 1.500-4-2-5.500Q4 4.500.3 9z" fill="#35c1b0" />
          <path d="M10 .2q9 .3 9.800 8.800.5 4-4.300 4.500-3.500 0-3.500-1.500 2-3-.5-5.500z" fill="#5fdc66" />
          <path d="M.3 9Q3 4.500 9 6q-4 2-3 7 1 5 6 6.500Q1 20.500.3 9z" fill="#1a8fe0" />
          <path d="M12 12q1 3 6.500 2-2 2.500-5 2.500-4.500-.5-5-4.500 0-2 2-3.500 2.300 1 1.500 3.500z" fill="#101010" />
        </App20>
      </Task>
      <Task>
        <App20>
          <path d="M10 20C2 20-1 12 1 6l1.500-3L4 5q1-1.500 3-1.500L11 5q0-3 2-5 1 2.500 3.500 4Q19.500 8 19.500 11 19 19.500 10 20z" fill="#ff5e2b" />
          <path d="M13 0q1 2.500 3.500 4Q19.500 8 19.500 11 19 15 16 17q1.500-5-2-8-3-2-1-9z" fill="#ffd43c" />
          <path d="M1 8q1 8 8 9 5 0 7-4-1 7-7 6.800Q1 18.500 1 8z" fill="#ff2d6f" /><circle cx="9.800" cy="10.800" r="4.300" fill="#7a3fd8" /><path d="M3 8q4-2.500 7 0L8 10z" fill="#ff9a2b" />
        </App20>
      </Task>
      <Task on>
        <App20>
          <path d="M14.500 0L20 2.500v15L14.500 20z" fill="#29a9f2" />
          <path d="M14.500 0v6L2.500 15.500.3 13.700zM14.500 20v-6L2.500 4.500.3 6.300z" fill="#1485d0" />
        </App20>
      </Task>
      <Task>
        <div className="flex size-[20px] items-center justify-center rounded-full bg-[#74a9d8] font-['Liberation_Serif',serif] text-[14px] leading-[20px] text-white">R</div>
      </Task>
      <Task>
        <App20><path d="M0 2h20v16H0z" fill="#474747" /><path d="M0 2h20v3H0z" fill="#9a9a9a" /><path d="M2.500 8l3.500 3-3.500 3M8.500 14.500h7" stroke="#fff" strokeWidth="1.500" fill="none" /></App20>
      </Task>
      <Task>
        <App20>
          <path d="M9 0h8q2.500 0 2.500 3v10q0 7-8 7H4q5-3 5-8z" fill="#6d7276" />
          <path d="M1 5q0-5 5-5h8q-2 1-2 4v9q0 7-7 7H1z" fill="#0b84d8" />
          <path d="M1 5q0-5 5-5h4L1 9z" fill="#6fd0ff" />
          <path d="M6 6h5v7H6z" fill="#082038" />
        </App20>
      </Task>
      <Task>
        <App20><rect width="20" height="20" fill="#000" /><path d="M0 1l6 4 3 7 3-3 1-4 4 3 3-2-2 7-7 7-5-5-5-5 3-1zM14 1h5l-2 5-1 0 1.500-4H14z" fill="#fff" /><path d="M5 8l5 6M11 11l3-2" stroke="#000" /></App20>
      </Task>
      <Task>
        <div className="flex size-[20px] items-center justify-center bg-[#f6e9e4] font-['Liberation_Sans',sans-serif] text-[19px] leading-[20px] font-bold text-[#b5202c]">A</div>
      </Task>
      <Task on active><BlenderLogo c="#ea8a1c" eye="#fff" inner="#265787" s={20} /></Task>

      <div className="ml-auto flex items-center">
        <Tray><Spotify /></Tray>
        <Tray><App20><rect width="20" height="20" rx="3" fill="#fff" /><path d="M7.500 3h5l-5.500 9.500L4.500 17 2 12.500z" fill="#1ea362" /><path d="M7.500 3h5L18 12.500h-5z" fill="#fbbc04" /><path d="M6.500 12.500H18L15.500 17h-11z" fill="#4285f4" /><path d="M10 7.500l2.800 5H7.200z" fill="#fff" /></App20></Tray>
        <Tray><App20><ellipse cx="10" cy="10" rx="7.500" ry="9.800" fill="#0a84ff" /><path d="M6.500 6.500l7 7L10 16.500v-13l3.500 3-7 7" stroke="#fff" fill="none" strokeWidth="1.200" /></App20></Tray>
        <Tray><App20><rect width="20" height="20" fill="#1d2020" /><path d="M2.500 10q4-5 7-4.500V5h7.500v10H9.500v-.5Q5 14 2.500 10z" fill="#5f9a22" /><path d="M4.500 10q5-5.500 9 0-5 5-9 0z" fill="none" stroke="#142008" strokeWidth="1.300" /><circle cx="10" cy="10" r="1.300" fill="#142008" /></App20></Tray>
        <Tray><App20><path d="M2 1h16v12H2z" fill="#e8eef4" /><path d="M2 1h16v2.500H2z" fill="#3a86d0" /><path d="M4 5h3v2H4z" fill="#d04040" /><path d="M4 8.500h6M4 11h5" stroke="#9ab" /><circle cx="12" cy="9.500" r="4.500" fill="#c5e2f5" stroke="#8ab0c8" /><path d="M8.500 13L3 18.500" stroke="#c07a3a" strokeWidth="2.500" /></App20></Tray>
        <Tray>
          <div className="size-[20px] border border-[#76b900] bg-gradient-to-br from-[#c0508a] via-[#8a7a9a] to-[#5aa050]" />
        </Tray>
        <Tray><App20><path d="M3.500 7.500V14.500q0 1 1 1h13V6H6M17.500 8.500H19.400v4h-1.900M.5 5.500h4.500v3q-2.200 2-4.500 0zM1.500 5.500v-2M4 5.500v-2" fill="none" stroke="#fff" strokeWidth="1.200" /><path d="M5.500 8h10v5.500h-10z" fill="#fff" /></App20></Tray>
        <Tray><App20><path d="M3.500 19A15 15 0 0 1 18.500 5M7 19A12 12 0 0 1 18.500 9M11 19a8 8 0 0 1 7.500-6" fill="none" stroke="#ddd" strokeWidth="1.200" /><circle cx="16.500" cy="17.300" r="1.700" fill="#fff" /></App20></Tray>
        <Tray><App20><path d="M2 16Q-1 12 2 10q1-5 7-6 5 0 6 5 5 0 5 4t-4 4H4z" fill="#0f6cbd" /><path d="M5 16q-2-4 4-5 8-4 11 2 0 4-4 4z" fill="#28a8ea" /></App20></Tray>
        <Tray><App20><path d="M2 16Q-1 12 2 10q1-5 7-6 5 0 6 5 5 0 5 4t-4 4H4z" fill="#9a9a9a" /><path d="M3 16q0-4 5-5 8-4 11 2 0 4-4 4H4z" fill="#efefef" /></App20></Tray>
        <Tray><App20><path d="M.7 7.500h3L8 4v12l-4.300-3.500h-3z" fill="none" stroke="#fff" strokeWidth="1.200" /><path d="M11 7.500q2 2.500 0 5M14 5.500q3.200 4.500 0 9M17 3.500q4.500 6.500 0 13" fill="none" stroke="#fff" strokeWidth="1.200" /></App20></Tray>
        <Tray><App20><path d="M1 2l6-2v13l-6-2zM8 1l7-1v12l-7 2zM4 12h8v6l-8-2z" fill="#bcbcbc" /><path d="M3 4h3M10 3h4M10 6h4" stroke="#777" /><path d="M11 11h7v8h-7z" fill="#e01010" /></App20></Tray>
        <Fit width={28} font={'14px "Open Sans", sans-serif'} className="ml-[8px] w-[45px]">POR</Fit>
        <Fit width={36} font={'14.500px "Open Sans", sans-serif'} className="w-[58px]">20:44</Fit>
        <App20><path d="M0 0h20v17h-7l-3 3-3-3H0z" fill="#fff" /><path d="M4 4.500h12M4 8.500h12M4 12.500h8" stroke="#101010" strokeWidth="1.300" /></App20>
        <div className="mr-[5px] ml-[25px] h-[38px] w-px bg-[#555]" />
      </div>
    </div>
  );
}

export default function App() {
  return (
    <div className="flex h-[1080px] w-[1920px] flex-col overflow-hidden bg-[#161616] font-['DejaVu_Sans',sans-serif]">
      <TitleBar />
      <TopBar />
      <div className="mt-[2px] mb-[2px] flex grow justify-between pr-[1px] pl-[1px]">
        <div className="flex w-[1521px] flex-col gap-[3px]">
          <ViewportHeader />
          <NodeEditor />
        </div>
        <div className="flex w-[393px] flex-col gap-[3px]">
          <Outliner />
          <Properties />
        </div>
      </div>
      <StatusBar />
      <TaskBar />
    </div>
  );
}
